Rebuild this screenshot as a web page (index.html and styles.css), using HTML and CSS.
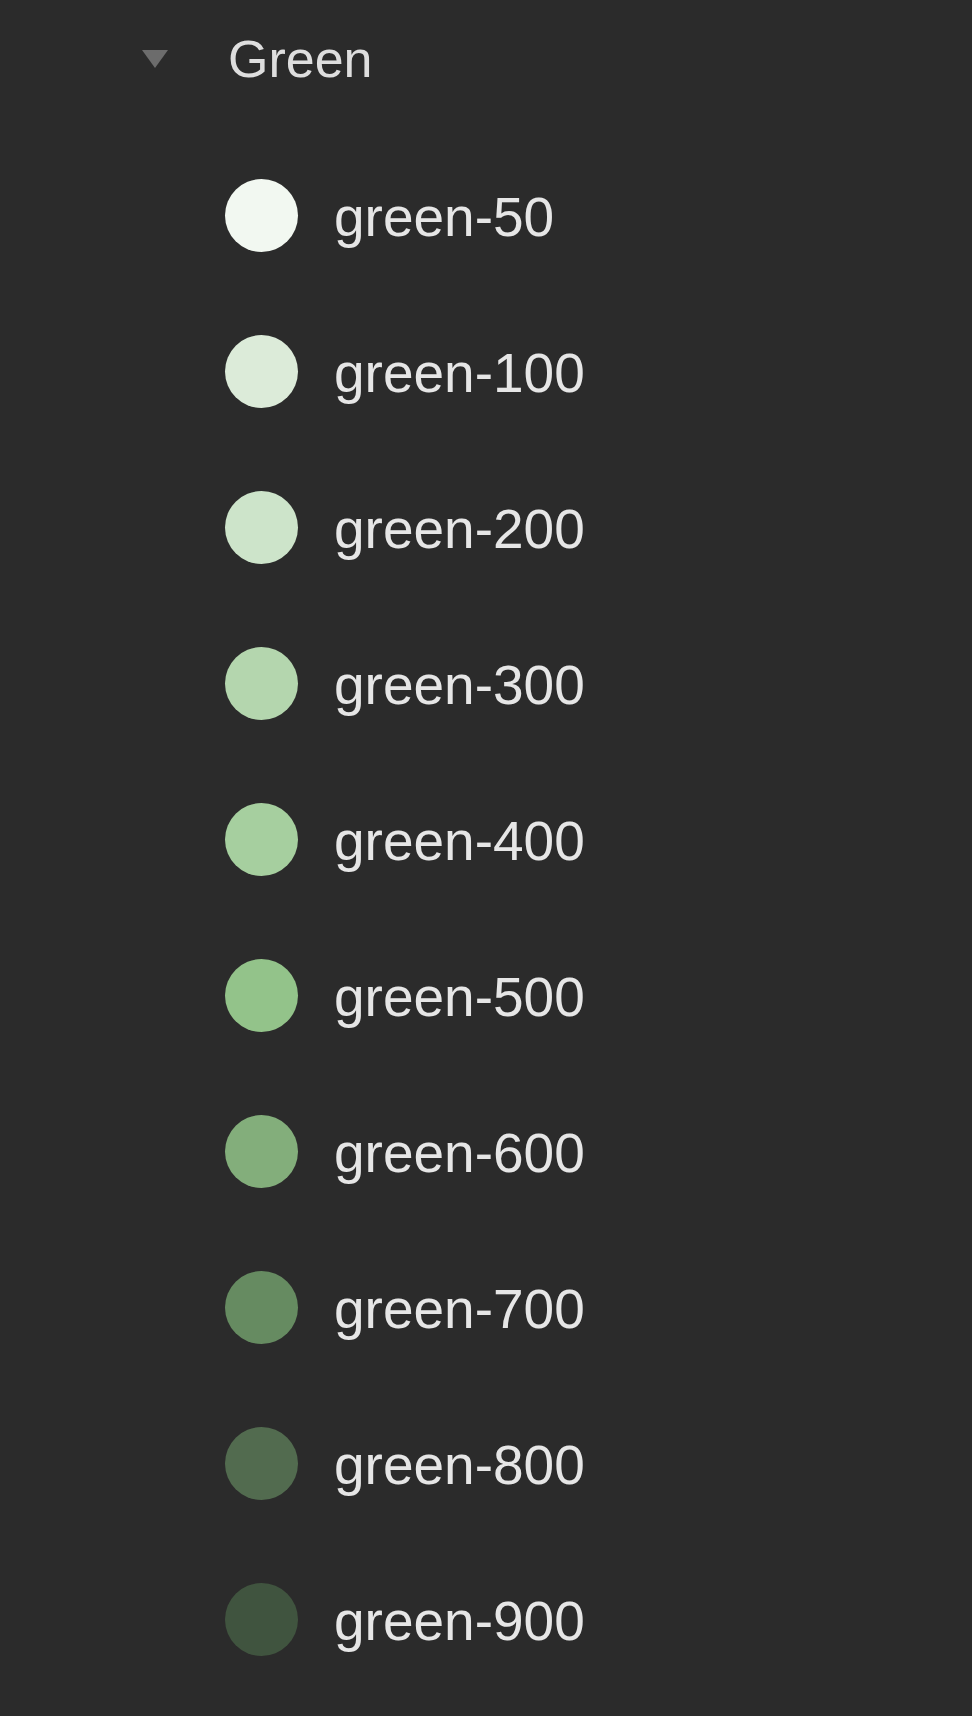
FILE: index.html
```html
<!DOCTYPE html>
<html>
<head>
<meta charset="utf-8">
<title>Green</title>
<link rel="stylesheet" href="styles.css">
</head>
<body>
<section class="group">
  <div class="group-header">
    <span class="caret"></span>
    <span class="group-title">Green</span>
  </div>
  <ul class="swatches">
    <li class="swatch"><span class="dot c50"></span><span class="name">green-50</span></li>
    <li class="swatch"><span class="dot c100"></span><span class="name">green-100</span></li>
    <li class="swatch"><span class="dot c200"></span><span class="name">green-200</span></li>
    <li class="swatch"><span class="dot c300"></span><span class="name">green-300</span></li>
    <li class="swatch"><span class="dot c400"></span><span class="name">green-400</span></li>
    <li class="swatch"><span class="dot c500"></span><span class="name">green-500</span></li>
    <li class="swatch"><span class="dot c600"></span><span class="name">green-600</span></li>
    <li class="swatch"><span class="dot c700"></span><span class="name">green-700</span></li>
    <li class="swatch"><span class="dot c800"></span><span class="name">green-800</span></li>
    <li class="swatch"><span class="dot c900"></span><span class="name">green-900</span></li>
  </ul>
</section>
</body>
</html>
```
FILE: styles.css
```css
html, body {
  margin: 0;
  padding: 0;
  background: #2b2b2b;
}
body {
  font-family: "Liberation Sans", Arial, sans-serif;
  color: #e4e4e4;
}
.group {
  display: flex;
  flex-direction: column;
}
.group-header {
  display: flex;
  align-items: center;
  margin-top: 33px;
  height: 52px;
  padding-left: 142px;
}
.caret {
  width: 0;
  height: 0;
  border-left: 13.5px solid transparent;
  border-right: 13.5px solid transparent;
  border-top: 18px solid #6c6c6c;
  margin-right: 60px;
}
.group-title {
  font-size: 52px;
  line-height: 52px;
  color: #dedede;
}
.swatches {
  list-style: none;
  margin: 0;
  padding: 52px 0 0 225px;
  display: flex;
  flex-direction: column;
}
.swatch {
  display: flex;
  align-items: center;
  height: 156px;
  gap: 36px;
}
.dot {
  width: 73px;
  height: 73px;
  border-radius: 50%;
  flex: none;
}
.name {
  font-size: 55px;
  line-height: 72px;
  padding-top: 3px;
  color: #e6e6e6;
}
.c50 { background: #f2f8f1; }
.c100 { background: #dcebd9; }
.c200 { background: #cde4ca; }
.c300 { background: #b4d6ae; }
.c400 { background: #a6cf9f; }
.c500 { background: #93c38a; }
.c600 { background: #83ae7b; }
.c700 { background: #668b61; }
.c800 { background: #526b4f; }
.c900 { background: #40543f; }
```
